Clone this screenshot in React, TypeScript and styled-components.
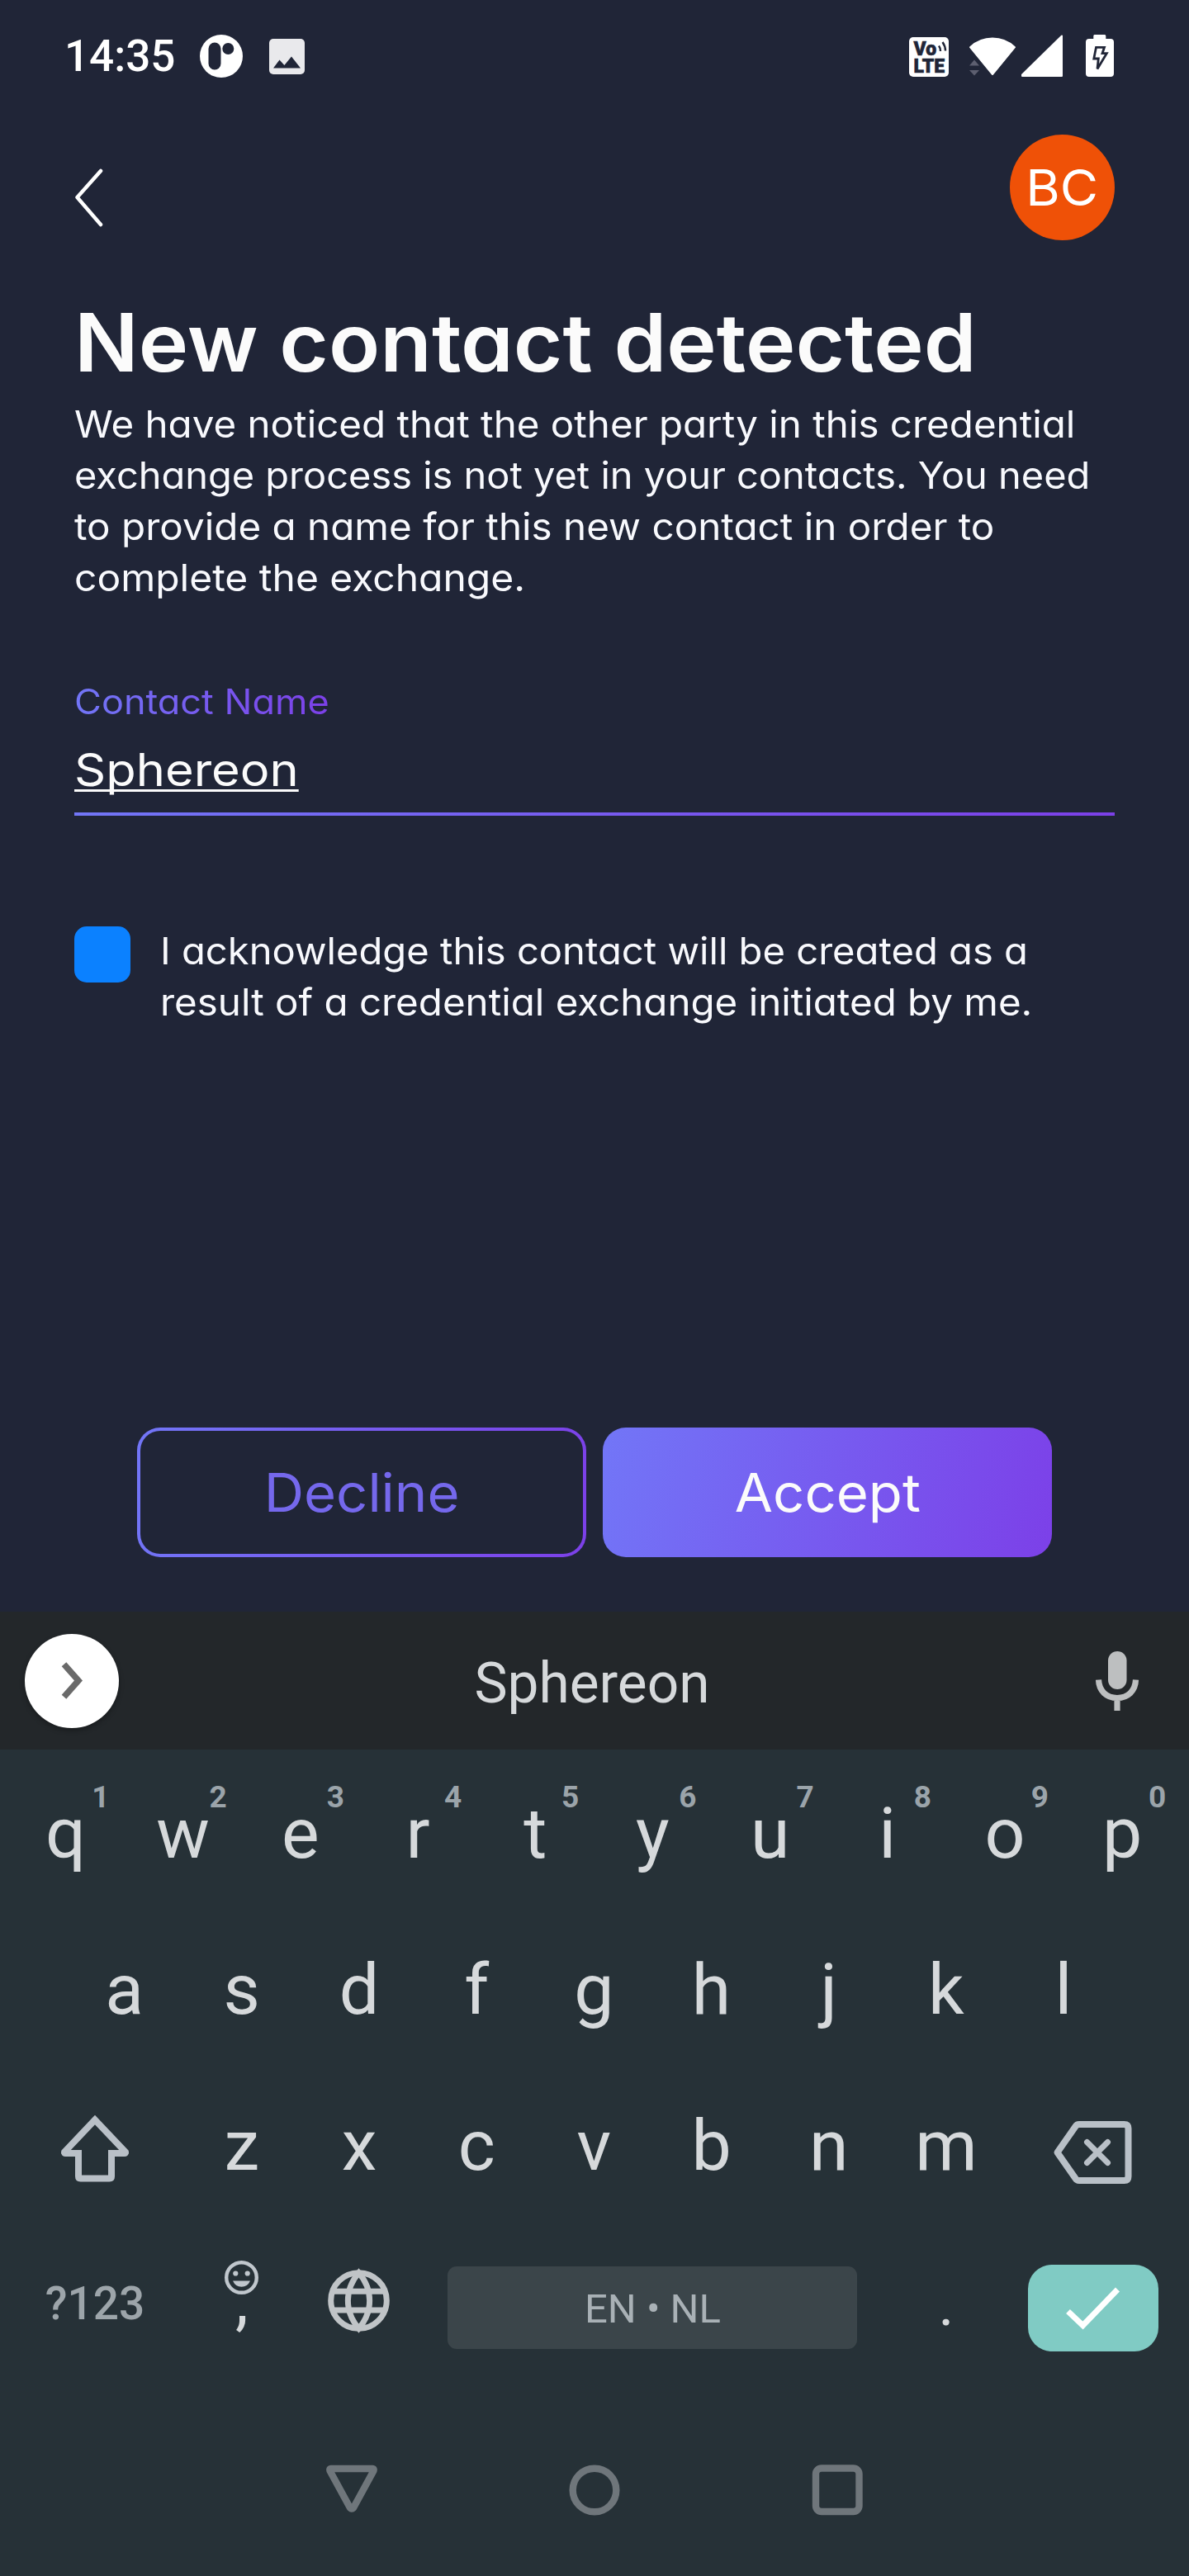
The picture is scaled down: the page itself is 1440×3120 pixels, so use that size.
import React from "react";
import styled, { createGlobalStyle } from "styled-components";

const GlobalStyle = createGlobalStyle`
  *, *::before, *::after { box-sizing: border-box; }
  body { margin: 0; background: #202537; }
  svg { display: block; flex: none; overflow: visible; }
  h1, p { margin: 0; }
  button { border: 0; padding: 0; background: none; font: inherit; }
`;

const APP_FONT = `Inter, "Open Sans", sans-serif`;
const SYSTEM_FONT = `Roboto, "Noto Sans", sans-serif`;
const KEY_WIDTH = 142.2;

const Phone = styled.div`
  width: 1440px;
  height: 3120px;
  display: flex;
  flex-direction: column;
  overflow: hidden;
  background: #202537;
`;

/* ---------- app screen ---------- */

const Screen = styled.main`
  height: 1952px;
  display: flex;
  flex-direction: column;
  color: #fbfbfb;
  font-family: ${APP_FONT};
  font-feature-settings: "cv11";
`;

const StatusBar = styled.div`
  height: 136px;
  padding: 42px 91px 0 78px;
  display: flex;
  justify-content: space-between;
  font-family: ${SYSTEM_FONT};
`;

const StatusGroup = styled.div`
  display: flex;
  align-items: flex-start;
`;

const Clock = styled.span`
  width: 164px;
  font-size: 53px;
  font-weight: 500;
  line-height: 53px;
  color: #fff;
`;

const StatusIcon = styled.span<{ $left?: number; $top?: number }>`
  margin-left: ${(p) => p.$left ?? 0}px;
  margin-top: ${(p) => p.$top ?? 0}px;
`;

const VolteBadge = styled.span`
  width: 48px;
  height: 48px;
  margin-top: 3px;
  padding: 3.6px 0 0 5.5px;
  border-radius: 5px;
  background: #fff;
  color: #202537;
  font-size: 23px;
  font-weight: 900;
  line-height: 21px;
  -webkit-text-stroke: 0.6px #202537;
`;

const VolteLine = styled.span`
  display: flex;
  gap: 2px;
`;

const Header = styled.header`
  height: 224px;
  padding: 27px 90px 0;
  display: flex;
  justify-content: space-between;
  align-items: flex-start;
`;

const BackButton = styled.button`
  margin-top: 40px;
`;

const Avatar = styled.div`
  width: 127px;
  height: 128px;
  border-radius: 50%;
  display: flex;
  align-items: center;
  justify-content: center;
  background: #ef5107;
  color: #fff;
  font-size: 61px;
  line-height: 128px;
`;

const Content = styled.section`
  padding: 0 90px;
`;

const Wide = styled.span<{ $stretch: number; $centered?: boolean }>`
  display: inline-block;
  white-space: nowrap;
  transform: scaleX(${(p) => p.$stretch});
  transform-origin: ${(p) => (p.$centered ? "center" : "left")};
`;

const Title = styled.h1`
  font-size: 97px;
  font-weight: 600;
  line-height: 110px;
`;

const TextBlock = styled.p<{ $top?: number }>`
  margin-top: ${(p) => p.$top ?? 0}px;
  display: flex;
  flex-direction: column;
  align-items: flex-start;
  font-size: 45px;
  line-height: 62px;
  color: #f8f9fd;
`;

const Field = styled.div`
  margin-top: 94px;
  display: flex;
  flex-direction: column;
  align-items: flex-start;
`;

const FieldLabel = styled(Wide)`
  font-size: 42px;
  line-height: 50px;
  color: transparent;
  background: linear-gradient(90deg, #7276f7, #7c40e8);
  background-clip: text;
  -webkit-background-clip: text;
`;

const FieldInput = styled.div`
  width: 100%;
  height: 88px;
  margin-top: 25px;
  border-bottom: 4px solid;
  border-image: linear-gradient(90deg, #7276f7, #7c40e8) 1;
  font-size: 55px;
  line-height: 64px;
`;

const FieldValue = styled(Wide)`
  text-decoration: underline;
  text-decoration-thickness: 3px;
  text-decoration-skip-ink: none;
  text-underline-offset: 4px;
`;

const Acknowledge = styled.div`
  margin-top: 134px;
  display: flex;
  align-items: flex-start;
  gap: 36px;
`;

const Checkbox = styled.span`
  width: 68px;
  height: 68px;
  border-radius: 15px;
  background: #0b81ff;
`;

const Actions = styled.div`
  margin-top: auto;
  padding: 0 166px 66px;
  display: flex;
  gap: 20px;
`;

const ActionButton = styled.button<{ $outlined?: boolean }>`
  flex: none;
  width: 544px;
  height: 157px;
  border: ${(p) => (p.$outlined ? "4.5px solid transparent" : "0")};
  border-radius: 28px;
  background: ${(p) =>
    p.$outlined
      ? "linear-gradient(#202537, #202537) padding-box, linear-gradient(98deg, #7276f7, #7c40e8) border-box"
      : "linear-gradient(105deg, #7276f7, #7c40e8)"};
  color: ${(p) => (p.$outlined ? "#7568ec" : "#fbfbfb")};
  font-size: 64px;
`;

/* ---------- keyboard ---------- */

const Keyboard = styled.section`
  flex: 1;
  display: flex;
  flex-direction: column;
  background: #263137;
  color: #d6d9db;
  font-family: ${SYSTEM_FONT};
`;

const SuggestionBar = styled.div`
  height: 167px;
  padding: 0 61px 0 30px;
  display: grid;
  grid-template-columns: 114px 1fr 52px;
  align-items: center;
  background: #23272a;
`;

const ExpandButton = styled.button`
  width: 114px;
  height: 114px;
  border-radius: 50%;
  display: flex;
  align-items: center;
  justify-content: center;
  background: #fff;
  box-shadow: 0 3px 6px rgba(0, 0, 0, 0.3);
`;

const Suggestion = styled.span`
  padding: 7px 37px 0 0;
  text-align: center;
  font-size: 67.6px;
  line-height: 80px;
`;

const Rows = styled.div`
  padding: 7px 0 0 8.4px;
`;

const Row = styled.div<{ $indent?: number; $top?: number }>`
  height: 189.3px;
  padding-left: ${(p) => p.$indent ?? 0}px;
  padding-top: ${(p) => p.$top ?? 0}px;
  display: flex;
  align-items: center;
`;

const Key = styled.button<{ $span?: number; $lift?: number; $drop?: number; $size?: number }>`
  position: relative;
  width: ${(p) => (p.$span ?? 1) * KEY_WIDTH}px;
  height: 100%;
  padding-top: ${(p) => p.$drop ?? 0}px;
  padding-bottom: ${(p) => p.$lift ?? 0}px;
  display: flex;
  align-items: center;
  justify-content: center;
  color: #d6d9db;
  font-size: ${(p) => p.$size ?? 86}px;
  line-height: 100px;
`;

const Hint = styled.span`
  position: absolute;
  left: calc(50% + 42.5px);
  top: 31.4px;
  transform: translateX(-50%);
  font-size: 37px;
  font-weight: 700;
  line-height: 40px;
  color: #9ba4aa;
`;

const SymbolsLabel = styled.span`
  font-size: 55px;
  font-weight: 500;
  color: #9da5aa;
`;

const CommaKey = styled(Key)`
  flex-direction: column;
  justify-content: flex-start;
  padding-top: 31.6px;
`;

const Comma = styled.span`
  margin-top: -12px;
  font-size: 80px;
  line-height: 40px;
`;

const SpaceBar = styled.span`
  width: 496px;
  height: 100px;
  border-radius: 11px;
  display: flex;
  align-items: center;
  justify-content: center;
  padding-top: 4px;
  background: #3b454a;
  color: #a9b1b6;
  font-size: 49px;
`;

const EnterPill = styled.span`
  width: 158px;
  height: 105px;
  border-radius: 29px;
  display: flex;
  align-items: center;
  justify-content: center;
  background: #80cbc4;
`;

const NavBar = styled.nav`
  margin-top: 101.5px;
  padding-left: 395px;
  display: flex;
  gap: 232px;
`;

const topRow = "qwertyuiop".split("");
const homeRow = "asdfghjkl".split("");
const bottomRow = "zxcvbnm".split("");

const VolteIcon = () => (
  <VolteBadge>
    <VolteLine>
      Vo
      <svg width="10" height="14" viewBox="0 0 10 14" fill="none" stroke="#202537" strokeWidth="2.4">
        <path d="M1 6.500Q3 9 3 13M5.500 2Q9 7 9 12.500" />
      </svg>
    </VolteLine>
    <VolteLine>LTE</VolteLine>
  </VolteBadge>
);

const AppIcon = () => (
  <svg width="52" height="52" viewBox="0 0 52 52">
    <circle cx="26" cy="26" r="26" fill="#fff" />
    <rect x="10.500" y="9.500" width="15" height="33" rx="7.500" fill="#202537" />
    <circle cx="34.300" cy="17" r="7" fill="#202537" />
  </svg>
);

const PictureIcon = () => (
  <svg width="43" height="43" viewBox="0 0 43 43">
    <rect width="43" height="43" rx="5" fill="#e9e9ec" />
    <path d="M5 35.500 12.500 25.500 18.400 32 27 21.500 38 35.500z" fill="#202537" />
  </svg>
);

const WifiIcon = () => (
  <svg width="58" height="48" viewBox="0 0 58 48">
    <path d="M2 12.200A39.500 39.500 0 0 1 56 12.200L29 45z" fill="#fff" stroke="#fff" strokeWidth="2" strokeLinejoin="round" />
    <path d="M1 34.500 7 27.500 13 34.500zM1 40 7 46.500 13 40z" fill="#5d5f70" />
  </svg>
);

const SignalIcon = () => (
  <svg width="50" height="51" viewBox="0 0 50 51">
    <path d="M49 1.500V50H1V48.500z" fill="#fff" stroke="#fff" strokeWidth="2" strokeLinejoin="round" />
  </svg>
);

const BatteryIcon = () => (
  <svg width="34" height="51" viewBox="0 0 34 51">
    <path d="M10.500 0H23Q24.300 0 24.300 1.500V5H30Q34 5 34 9V47Q34 51 30 51H4Q0 51 0 47V9Q0 5 4 5H9.300V1.500Q9.300 0 10.500 0z" fill="#fff" />
    <path d="M12.500 15.300H22.500L20 22.700H25.300L14 41.500 15.300 29H9.800z" fill="#fff" stroke="#202537" strokeWidth="2.800" />
  </svg>
);

const BackIcon = () => (
  <svg width="36" height="72" viewBox="0 0 36 72" fill="none" stroke="#fff" strokeWidth="4.500" strokeLinecap="round" strokeLinejoin="round">
    <path d="M32 4 3.500 36 32 69" />
  </svg>
);

const ChevronIcon = () => (
  <svg width="25" height="45" viewBox="0 0 25 45" fill="none" stroke="#6a6a6a" strokeWidth="7.500">
    <path d="M2.500 2.700 20 22.500 2.500 42.300" />
  </svg>
);

const MicIcon = () => (
  <svg width="52" height="72" viewBox="0 0 52 72">
    <rect x="15" width="22.500" height="46" rx="11.250" fill="#bdbfc0" />
    <path d="M3.500 34.500C4 48 13 56.500 26 56.500S48 48 48.500 34.500M26 56V72" fill="none" stroke="#bdbfc0" strokeWidth="7.200" />
  </svg>
);

const ShiftIcon = () => (
  <svg width="84" height="82" viewBox="0 0 84 82" fill="none" stroke="#b9c0c7" strokeWidth="8">
    <path d="M42 6.500 5 45.500Q4.500 47 6.500 47H22V75Q22 77.500 24.500 77.500H59.500Q62 77.500 62 75V47H77.500Q79.500 47 79 45.500z" />
  </svg>
);

const BackspaceIcon = () => (
  <svg width="95" height="76" viewBox="0 0 95 76" fill="none" stroke="#b9c0c7" strokeWidth="8" strokeLinejoin="round">
    <path d="M31 4H85.500Q90.500 4 90.500 9V67Q90.500 72 85.500 72H31Q28 72 26.500 69.500L4.500 38 26.500 6.500Q28 4 31 4z" />
    <path d="M40.500 25.500 65.500 50.500M65.500 25.500 40.500 50.500" strokeWidth="7" strokeLinecap="round" />
  </svg>
);

const EmojiIcon = () => (
  <svg width="41" height="41" viewBox="0 0 41 41" fill="#c0c7cd">
    <circle cx="20.500" cy="20.500" r="18.300" fill="none" stroke="#c0c7cd" strokeWidth="4.400" />
    <circle cx="13.300" cy="15.500" r="3.100" />
    <circle cx="27.700" cy="15.500" r="3.100" />
    <path d="M10 24.500H31Q28 31.700 20.500 31.700T10 24.500z" />
  </svg>
);

const GlobeIcon = () => (
  <svg width="75" height="75" viewBox="0 0 75 75" fill="none" stroke="#c0c4c7" strokeWidth="7">
    <circle cx="37.500" cy="37.500" r="33.800" />
    <path d="M37.500 3.700C20 24 20 51 37.500 71.300C55 51 55 24 37.500 3.700zM6 26.300H69M6 48.900H69" />
  </svg>
);

const CheckIcon = () => (
  <svg width="65" height="51" viewBox="0 0 65 51" fill="none" stroke="#fff" strokeWidth="7">
    <path d="M2.500 29.500 20.500 46.500 62.500 3" />
  </svg>
);

const NavIcon = ({ shape }: { shape: "back" | "home" | "recent" }) => (
  <svg width="62" height="62" viewBox="0 0 62 62" fill="none" stroke="#6f767b" strokeWidth="8.400" strokeLinejoin="round">
    {shape === "back" && <path d="M5.500 5H56.500Q58 5.500 57.500 7.500L33 52.500Q31 54.500 29 52.500L4.500 7.500Q4 5.500 5.500 5z" />}
    {shape === "home" && <circle cx="31" cy="31" r="26.300" />}
    {shape === "recent" && <rect x="5" y="4.500" width="52.500" height="52.500" rx="7" />}
  </svg>
);

export default function App() {
  return (
    <>
      <GlobalStyle />
      <Phone>
        <Screen>
          <StatusBar>
            <StatusGroup>
              <Clock>14:35</Clock>
              <StatusIcon><AppIcon /></StatusIcon>
              <StatusIcon $left={32} $top={5}><PictureIcon /></StatusIcon>
            </StatusGroup>
            <StatusGroup>
              <VolteIcon />
              <StatusIcon $left={24} $top={3}><WifiIcon /></StatusIcon>
              <StatusIcon $left={6}><SignalIcon /></StatusIcon>
              <StatusIcon $left={28}><BatteryIcon /></StatusIcon>
            </StatusGroup>
          </StatusBar>

          <Header>
            <BackButton aria-label="Back"><BackIcon /></BackButton>
            <Avatar><Wide $stretch={1.04} $centered>BC</Wide></Avatar>
          </Header>

          <Content>
            <Title><Wide $stretch={1.055}>New contact detected</Wide></Title>
            <TextBlock $top={13}>
              <Wide $stretch={1.056}>We have noticed that the other party in this credential</Wide>
              <Wide $stretch={1.0435}>exchange process is not yet in your contacts. You need</Wide>
              <Wide $stretch={1.058}>to provide a name for this new contact in order to</Wide>
              <Wide $stretch={1.066}>complete the exchange.</Wide>
            </TextBlock>

            <Field>
              <FieldLabel $stretch={1.072}>Contact Name</FieldLabel>
              <FieldInput><FieldValue $stretch={1.083}>Sphereon</FieldValue></FieldInput>
            </Field>

            <Acknowledge>
              <Checkbox />
              <TextBlock $top={-1}>
                <Wide $stretch={1.048}>I acknowledge this contact will be created as a</Wide>
                <Wide $stretch={1.0555}>result of a credential exchange initiated by me.</Wide>
              </TextBlock>
            </Acknowledge>
          </Content>

          <Actions>
            <ActionButton $outlined><Wide $stretch={1.047} $centered>Decline</Wide></ActionButton>
            <ActionButton><Wide $stretch={1.048} $centered>Accept</Wide></ActionButton>
          </Actions>
        </Screen>

        <Keyboard>
          <SuggestionBar>
            <ExpandButton aria-label="Expand"><ChevronIcon /></ExpandButton>
            <Suggestion>Sphereon</Suggestion>
            <MicIcon />
          </SuggestionBar>

          <Rows>
            <Row>
              {topRow.map((letter, i) => (
                <Key key={letter}>
                  {letter}
                  <Hint>{(i + 1) % 10}</Hint>
                </Key>
              ))}
            </Row>
            <Row $indent={KEY_WIDTH / 2}>
              {homeRow.map((letter) => <Key key={letter}>{letter}</Key>)}
            </Row>
            <Row>
              <Key $span={1.5} $drop={6} aria-label="Shift"><ShiftIcon /></Key>
              {bottomRow.map((letter) => <Key key={letter}>{letter}</Key>)}
              <Key $span={1.5} $drop={16} aria-label="Backspace"><BackspaceIcon /></Key>
            </Row>
            <Row $top={13}>
              <Key $span={1.5} $lift={10}><SymbolsLabel>?123</SymbolsLabel></Key>
              <CommaKey>
                <EmojiIcon />
                <Comma>,</Comma>
              </CommaKey>
              <Key $lift={17} aria-label="Language"><GlobeIcon /></Key>
              <Key $span={4}><SpaceBar>EN • NL</SpaceBar></Key>
              <Key $lift={7} $size={72}>.</Key>
              <Key $span={1.5} aria-label="Done"><EnterPill><CheckIcon /></EnterPill></Key>
            </Row>
          </Rows>

          <NavBar>
            <NavIcon shape="back" />
            <NavIcon shape="home" />
            <NavIcon shape="recent" />
          </NavBar>
        </Keyboard>
      </Phone>
    </>
  );
}
